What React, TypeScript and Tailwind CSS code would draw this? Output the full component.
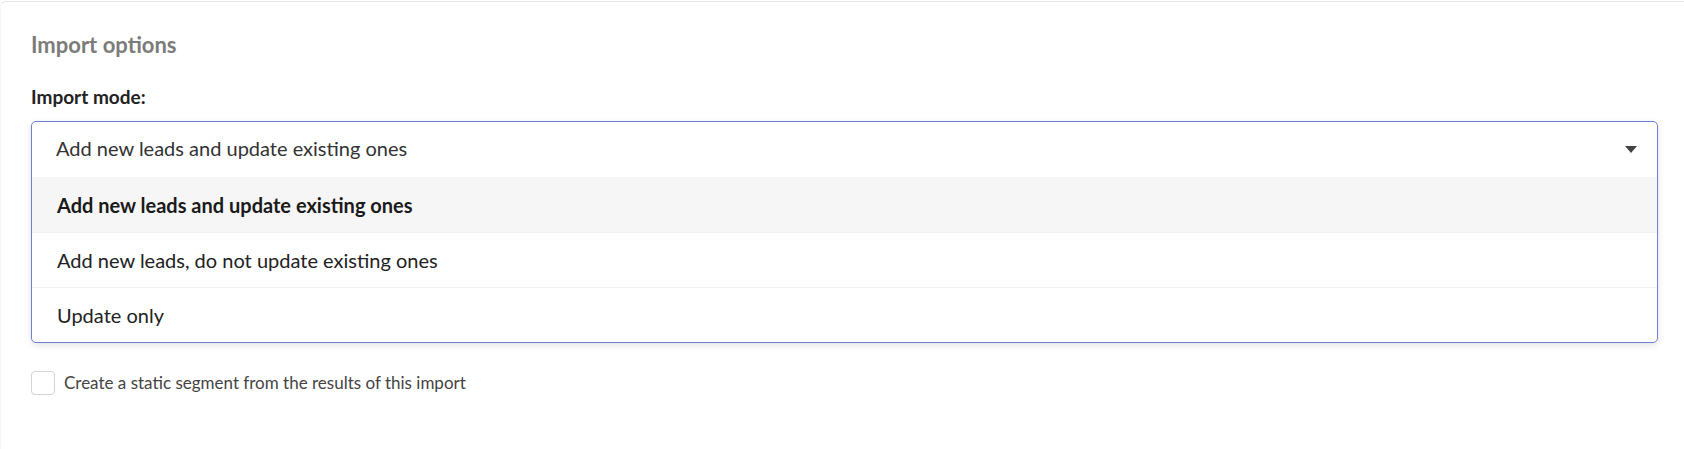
import { useState } from "react";

const options = [
  "Add new leads and update existing ones",
  "Add new leads, do not update existing ones",
  "Update only",
];

export default function App() {
  const [selected, setSelected] = useState(0);
  const [staticSegment, setStaticSegment] = useState(false);

  return (
    <div className="h-[449px] w-full overflow-hidden bg-white pt-px font-['Lato',sans-serif]">
      <section className="h-full rounded-tl-[6px] border-l border-t border-l-[#f6f6f6] border-t-[#e4e4e4] pl-[30px] pr-[26px] pt-[31px]">
        <h2 className="text-[22px] font-bold leading-[24px] text-[#7b7b7b]">Import options</h2>

        <label className="mt-[29px] block text-[19px] font-bold leading-[22px] text-[#222]">Import mode:</label>

        <div className="mt-[13px] overflow-hidden rounded-[5px] border border-[#6d80d8] bg-white shadow-[0_2px_6px_rgba(0,0,0,0.12)]">
          <button
            className="flex h-[55px] w-full items-center justify-between pb-[3px] pl-[24px] pr-[20px] text-left text-[20px] text-[#333]"
            type="button"
          >
            <span>{options[selected]}</span>
            <svg className="mt-[3px] h-[7px] w-[12px]" viewBox="0 0 12 7" fill="#444">
              <path d="M0 0h12L6 7z" />
            </svg>
          </button>
          <ul>
            {options.map((option, i) => (
              <li
                key={option}
                className={`flex h-[55px] cursor-pointer items-center pl-[25px] text-[20px] ${
                  i === selected ? "bg-[#f6f6f6] font-bold text-[#1a1a1a]" : "border-t border-[#f1f1f1] text-[#222]"
                }`}
                onClick={() => setSelected(i)}
              >
                {option}
              </li>
            ))}
          </ul>
        </div>

        <label className="mt-[27px] flex cursor-pointer items-center gap-[9px]">
          <input
            checked={staticSegment}
            className="h-[24px] w-[24px] shrink-0 appearance-none rounded-[4px] border border-[#d3d3d3] bg-white"
            onChange={(e) => setStaticSegment(e.target.checked)}
            type="checkbox"
          />
          <span className="text-[17px] text-[#444]">Create a static segment from the results of this import</span>
        </label>
      </section>
    </div>
  );
}
